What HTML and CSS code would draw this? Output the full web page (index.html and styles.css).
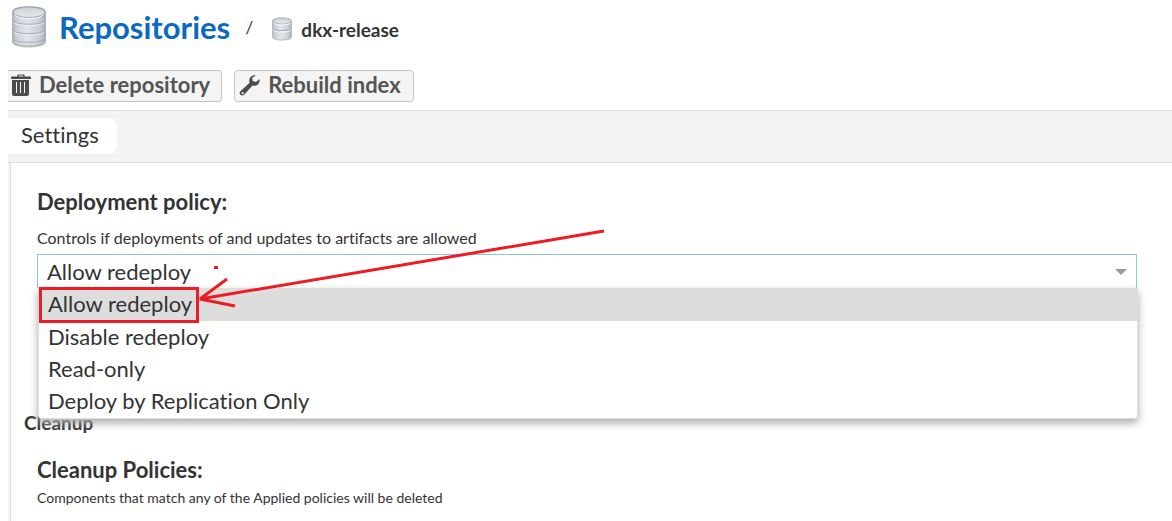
FILE: index.html
```html
<!DOCTYPE html>
<html lang="en">
<head>
<meta charset="utf-8">
<meta name="viewport" content="width=device-width, initial-scale=1">
<title>Repositories / dkx-release</title>
<link rel="stylesheet" href="styles.css">
</head>
<body>
<header class="breadcrumb">
  <svg class="db-large" viewBox="0 0 38 44" aria-hidden="true">
    <defs>
      <linearGradient id="metal" x1="0" x2="1" y1="0" y2="0">
        <stop offset="0" stop-color="#b4bcc4"/><stop offset=".15" stop-color="#cdd3da"/><stop offset=".45" stop-color="#e0e5ea"/><stop offset=".8" stop-color="#c9cfd6"/><stop offset="1" stop-color="#aab2ba"/>
      </linearGradient>
      <linearGradient id="lid" x1="0" x2="0" y1="0" y2="1">
        <stop offset="0" stop-color="#c9cfd6"/><stop offset="1" stop-color="#e6eaee"/>
      </linearGradient>
    </defs>
    <path d="M1 37c0 5 7 7 18 7s18-2 18-7" fill="#c8c8c8" opacity=".6"/>
    <path d="M2 6v31c0 3 7 5 17 5s17-2 17-5V6c0-3-5-5-17-5S2 3 2 6z" fill="url(#metal)" stroke="#949ba2"/>
    <path d="M2.500 15c1 3 8 4 16.500 4s15.500-1 16.500-4M2.500 25c1 3 8 4 16.500 4s15.500-1 16.500-4M2.500 34c1 3 8 4 16.500 4s15.500-1 16.500-4" fill="none" stroke="#a2aab2"/>
    <path d="M3 17c2 2.500 8 3.500 16 3.500s14-1 16-3.500M3 27c2 2.500 8 3.500 16 3.500s14-1 16-3.500" fill="none" stroke="#eef1f4"/>
    <ellipse cx="19" cy="6.500" rx="16.500" ry="5.500" fill="url(#lid)" stroke="#9ba2a9"/>
    <path d="M4 9c2 3 8 4 15 4s13-1 15-4" fill="none" stroke="#f7f9fa"/>
  </svg>
  <h1 class="title"><a class="title-link" href="#">Repositories</a></h1>
  <span class="slash">/</span>
  <svg class="db-small" viewBox="0 0 22 24" aria-hidden="true">
    <path d="M1.500 4v16c0 2 4 3 9.500 3s9.500-1 9.500-3V4c0-2-4-3-9.500-3S1.500 2 1.500 4z" fill="url(#metal)" stroke="#b4bbc2"/>
    <path d="M2 11c1 2 4 2.500 9 2.500s8-.5 9-2.500" fill="none" stroke="#a2aab2"/>
    <path d="M2 12.500c1 2 4 2.500 9 2.500s8-.5 9-2.500" fill="none" stroke="#f4f6f8"/>
    <ellipse cx="11" cy="4" rx="9" ry="3" fill="url(#lid)" stroke="#b0b7be"/>
    <path d="M2.500 6c1.500 1.500 4 2 8.500 2s7-.5 8.500-2" fill="none" stroke="#f7f9fa"/>
  </svg>
  <span class="current">dkx-release</span>
</header>

<div class="toolbar">
  <button class="button button-first" type="button">
    <svg class="icon" viewBox="0 0 22 24" aria-hidden="true">
      <path fill="#4c4c4c" fill-rule="evenodd" d="M2 3.500h5L8 1.500h6l1 2h5a1 1 0 0 1 1 1v1.500H1V4.500a1 1 0 0 1 1-1zM9 2.500l-.5 1h5l-.5-1zM2 7h17v14a2 2 0 0 1-2 2H4a2 2 0 0 1-2-2zM6 9v11h1V9zM10 9v11h1V9zM14 9v11h1V9z"/>
    </svg>
    <span>Delete repository</span>
  </button>
  <button class="button" type="button">
    <svg class="icon" viewBox="0 0 24 24" aria-hidden="true">
      <path fill="#4c4c4c" fill-rule="evenodd" d="M18.500 1.500c-4-1-7.500 2-7.300 6 0 .8.200 1.500.4 2.100L1.800 18.500c-1.500 1.300-1.500 3 0 4.200 1.300 1.200 3 1 4.300-.5l8.600-9.600c4.500 1.200 8.300-2 7.900-7.100l-4.300 3.100-3.400-1.100-.5-3.500zM4 19.700a1.200 1.200 0 1 1 0 2.400 1.200 1.200 0 0 1 0-2.400z"/>
    </svg>
    <span>Rebuild index</span>
  </button>
</div>

<nav class="tabs">
  <button class="tab" type="button">Settings</button>
</nav>

<main class="panel">
  <section class="group">
    <label class="label" for="policy">Deployment policy:</label>
    <p class="help">Controls if deployments of and updates to artifacts are allowed</p>
    <div class="combo">
      <select class="select" id="policy">
        <option>Allow redeploy</option>
        <option>Disable redeploy</option>
        <option>Read-only</option>
        <option>Deploy by Replication Only</option>
      </select>
      <svg class="caret" viewBox="0 0 12 6" aria-hidden="true"><path d="M0 0h12L6 6z" fill="#999"/></svg>
      <ul class="menu" role="listbox" aria-label="Deployment policy">
        <li class="item item-active" role="option" aria-selected="true">Allow redeploy</li>
        <li class="item" role="option">Disable redeploy</li>
        <li class="item" role="option">Read-only</li>
        <li class="item" role="option">Deploy by Replication Only</li>
      </ul>
      <svg class="arrow" viewBox="0 0 580 100" aria-hidden="true">
        <g fill="none" stroke="#ed1c24" stroke-width="3">
          <rect x="3.500" y="64.500" width="157" height="33"/>
          <path d="M567 7L163 75l27-20M163 75l35 7"/>
        </g>
        <path d="M177 42h4v3h-4z" fill="#ed1c24"/>
      </svg>
    </div>
  </section>
  <h2 class="section-title">Cleanup</h2>
  <section class="group">
    <h3 class="label">Cleanup Policies:</h3>
    <p class="help help-small">Components that match any of the Applied policies will be deleted</p>
  </section>
</main>
</body>
</html>
```
FILE: styles.css
```css
* {
  box-sizing: border-box;
}

body {
  margin: 0;
  padding-left: 8px;
  overflow: hidden;
  background: #fff;
  color: #333;
  font-family: Lato, "Liberation Sans", sans-serif;
  font-variant-ligatures: none;
}

h1, h2, h3, p, ul {
  margin: 0;
  padding: 0;
}

.breadcrumb {
  display: flex;
  align-items: center;
  height: 60px;
  padding: 0 2px 6px;
}

.db-large {
  width: 38px;
  height: 42px;
}

.title {
  margin-left: 11px;
  font-size: 31px;
  line-height: 36px;
}

.title-link {
  color: #0b6abf;
  text-decoration: none;
}

.slash {
  margin-left: 15px;
  color: #444;
  font-size: 18px;
}

.db-small {
  width: 22px;
  height: 24px;
  margin: 4px 0 0 18px;
}

.current {
  margin-left: 8px;
  padding-top: 4px;
  font-size: 19px;
  font-weight: 700;
}

.toolbar {
  display: flex;
  gap: 12px;
  padding: 10px 0 8px;
}

.button {
  display: flex;
  align-items: center;
  gap: 7px;
  height: 32px;
  padding: 0 12px 2px 4px;
  border: 1px solid #c5c5c5;
  border-radius: 4px;
  background: #f4f4f4;
  color: #555;
  font: 700 22px/28px Lato, "Liberation Sans", sans-serif;
}

.button-first {
  padding-right: 11px;
  padding-left: 2px;
  border-left: 0;
  border-radius: 0 4px 4px 0;
}

.icon {
  width: 22px;
  height: 24px;
}

.tabs {
  height: 53px;
  padding: 7px 0;
  border: solid #ddd;
  border-width: 1px 0;
  background: #f3f3f3;
}

.tab {
  height: 36px;
  padding: 0 18px 2px 13px;
  border: 0;
  border-radius: 0 8px 8px 0;
  background: #fff;
  color: #333;
  font: 400 22px/28px Lato, "Liberation Sans", sans-serif;
  font-variant-ligatures: none;
}

.panel {
  min-height: 358px;
  padding: 24px 35px 0 13px;
  border-left: 1px solid #ddd;
  box-shadow: -2px 0 #f5f5f5;
  margin-left: 2px;
}

.group {
  padding-left: 13px;
}

.label {
  display: block;
  font-size: 22px;
  font-weight: 700;
  line-height: 30px;
}

.help {
  padding: 9px 0 4px;
  font-size: 16px;
  line-height: 24px;
}

.help-small {
  padding: 3px 0 0;
  font-size: 14px;
  line-height: 20px;
}

.combo {
  position: relative;
}

.select {
  display: block;
  width: 100%;
  height: 34px;
  padding: 0 9px;
  appearance: none;
  border: 1px solid #91c3e8;
  border-bottom: 0;
  border-radius: 0;
  background: #fff;
  color: #333;
  font: 400 22px/32px Lato, "Liberation Sans", sans-serif;
}

.caret {
  position: absolute;
  top: 15px;
  right: 10px;
  width: 12px;
  height: 6px;
}

.menu {
  position: absolute;
  top: 34px;
  right: -1px;
  left: 1px;
  padding-bottom: 1px;
  border: 1px solid #ddd;
  border-top: 0;
  border-radius: 0 0 4px 4px;
  background: #fff;
  box-shadow: 0 4px 8px #aaa;
  list-style: none;
}

.item {
  height: 32px;
  padding: 0 9px;
  font-size: 22px;
  line-height: 32px;
}

.item-active {
  height: 33px;
  background: #ddd;
}

.arrow {
  position: absolute;
  top: -30px;
  left: 0;
  width: 580px;
  height: 100px;
  pointer-events: none;
}

.section-title {
  padding: 123px 0 20px;
  font-size: 19px;
  line-height: 24px;
}
```
